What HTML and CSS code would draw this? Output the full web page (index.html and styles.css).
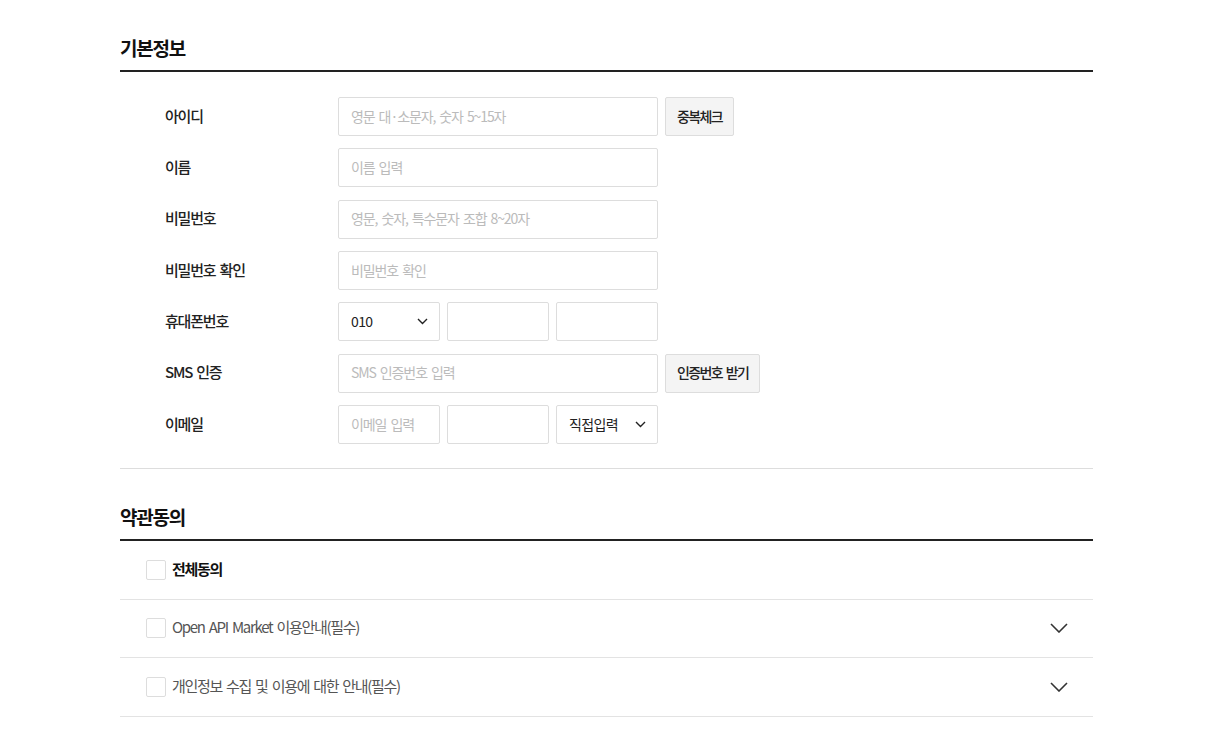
FILE: index.html
```html
<html>
<head>
<meta charset="utf-8">
<link rel="stylesheet" href="styles.css">
</head>
  <body>
    <div class="wrap">
      <h2 class="sec-title">기본정보</h2>
      <div class="form-box">
        <div class="row">
          <label class="lbl">아이디</label>
          <div class="fields">
            <input class="inp wide" type="text" placeholder="영문 대·소문자, 숫자 5~15자">
            <button class="btn">중복체크</button>
          </div>
        </div>
        <div class="row">
          <label class="lbl">이름</label>
          <div class="fields">
            <input class="inp wide" type="text" placeholder="이름 입력">
          </div>
        </div>
        <div class="row">
          <label class="lbl">비밀번호</label>
          <div class="fields">
            <input class="inp wide" type="password" placeholder="영문, 숫자, 특수문자 조합 8~20자">
          </div>
        </div>
        <div class="row">
          <label class="lbl">비밀번호 확인</label>
          <div class="fields">
            <input class="inp wide" type="password" placeholder="비밀번호 확인">
          </div>
        </div>
        <div class="row">
          <label class="lbl">휴대폰번호</label>
          <div class="fields">
            <div class="sel">
              <select class="inp small">
                <option>010</option>
                <option>011</option>
                <option>016</option>
              </select>
              <svg class="sel-arrow" width="11" height="7" viewBox="0 0 11 7"><path d="M1 1l4.5 4.5L10 1" fill="none" stroke="#222" stroke-width="1.4"/></svg>
            </div>
            <input class="inp small" type="text">
            <input class="inp small" type="text">
          </div>
        </div>
        <div class="row">
          <label class="lbl">SMS 인증</label>
          <div class="fields">
            <input class="inp wide" type="text" placeholder="SMS 인증번호 입력">
            <button class="btn">인증번호 받기</button>
          </div>
        </div>
        <div class="row">
          <label class="lbl">이메일</label>
          <div class="fields">
            <input class="inp small" type="text" placeholder="이메일 입력">
            <input class="inp small" type="text">
            <div class="sel">
              <select class="inp small">
                <option>직접입력</option>
                <option>naver.com</option>
                <option>gmail.com</option>
              </select>
              <svg class="sel-arrow" width="11" height="7" viewBox="0 0 11 7"><path d="M1 1l4.5 4.5L10 1" fill="none" stroke="#222" stroke-width="1.4"/></svg>
            </div>
          </div>
        </div>
      </div>

      <h2 class="sec-title second">약관동의</h2>
      <ul class="agree-list">
        <li class="agree-item">
          <input class="chk" type="checkbox" id="agAll">
          <label class="agree-txt all" for="agAll">전체동의</label>
        </li>
        <li class="agree-item">
          <input class="chk" type="checkbox" id="ag1">
          <label class="agree-txt" for="ag1">Open API Market 이용안내(필수)</label>
          <svg class="toggle" width="18" height="10" viewBox="0 0 18 10"><path d="M1 1l8 8 8-8" fill="none" stroke="#333" stroke-width="1.6"/></svg>
        </li>
        <li class="agree-item">
          <input class="chk" type="checkbox" id="ag2">
          <label class="agree-txt" for="ag2">개인정보 수집 및 이용에 대한 안내(필수)</label>
          <svg class="toggle" width="18" height="10" viewBox="0 0 18 10"><path d="M1 1l8 8 8-8" fill="none" stroke="#333" stroke-width="1.6"/></svg>
        </li>
      </ul>
    </div>
  </body>
</html>
```

FILE: styles.css
```css
body {
    margin: 0;
    background: #fff;
    color: #222;
    font-family: "Noto Sans CJK KR", "Noto Sans", sans-serif;
}

.wrap {
    width: 973px;
    margin-left: 120px;
}

.sec-title {
    margin: 34px 0 0;
    padding-bottom: 8px;
    border-bottom: 2px solid #222;
    font-size: 19px;
    line-height: 28px;
    font-weight: 700;
    color: #111;
    letter-spacing: -1.2px;
}

.form-box {
    padding: 25px 0 24px 45px;
    border-bottom: 1px solid #ddd;
}

.row {
    display: flex;
    align-items: center;
    height: 39px;
    margin-bottom: 12.35px;
}

.row:last-child {
    margin-bottom: 0;
}

.lbl {
    width: 173px;
    padding-bottom: 3px;
    font-size: 15px;
    font-weight: 500;
    color: #222;
    letter-spacing: -1.2px;
    word-spacing: 2px;
}

.fields {
    display: flex;
    gap: 7px;
    height: 100%;
}

.inp {
    box-sizing: border-box;
    height: 100%;
    padding: 0 12px 2px;
    border: 1px solid #ddd;
    border-radius: 2px;
    background: #fff;
    font-family: inherit;
    font-size: 14px;
    color: #222;
    outline: none;
    letter-spacing: -1.1px;
    word-spacing: 2px;
}

.inp::placeholder {
    color: #bbb;
}

.wide {
    width: 320px;
}

.small {
    width: 102px;
}

.sel {
    position: relative;
    height: 100%;
}

.sel select {
    -webkit-appearance: none;
    appearance: none;
    padding-right: 30px;
    letter-spacing: -0.6px;
}

.sel-arrow {
    position: absolute;
    right: 12px;
    top: 16px;
    pointer-events: none;
}

.btn {
    height: 100%;
    padding: 0 11px 2px;
    border: 1px solid #ddd;
    border-radius: 2px;
    background: #f4f4f4;
    font-family: inherit;
    font-size: 14px;
    font-weight: 500;
    color: #222;
    letter-spacing: -1.6px;
    word-spacing: 2px;
}

.sec-title.second {
    margin-top: 34px;
}

.agree-list {
    list-style: none;
    margin: 0;
    padding: 0;
}

.agree-item {
    display: flex;
    align-items: center;
    height: 57.5px;
    padding: 0 25px 0 26px;
    border-bottom: 1px solid #e3e3e3;
}

.chk {
    -webkit-appearance: none;
    appearance: none;
    width: 20px;
    height: 20px;
    margin: 0 6px 0 0;
    border: 1px solid #ddd;
    border-radius: 2px;
    background: #fff;
}

.agree-txt {
    flex: 1;
    padding-bottom: 3px;
    font-size: 15px;
    font-weight: 400;
    color: #555;
    letter-spacing: -1.3px;
    word-spacing: 2px;
}

.agree-txt.all {
    font-weight: 700;
    color: #111;
}

.toggle {
    flex: none;
}
```
